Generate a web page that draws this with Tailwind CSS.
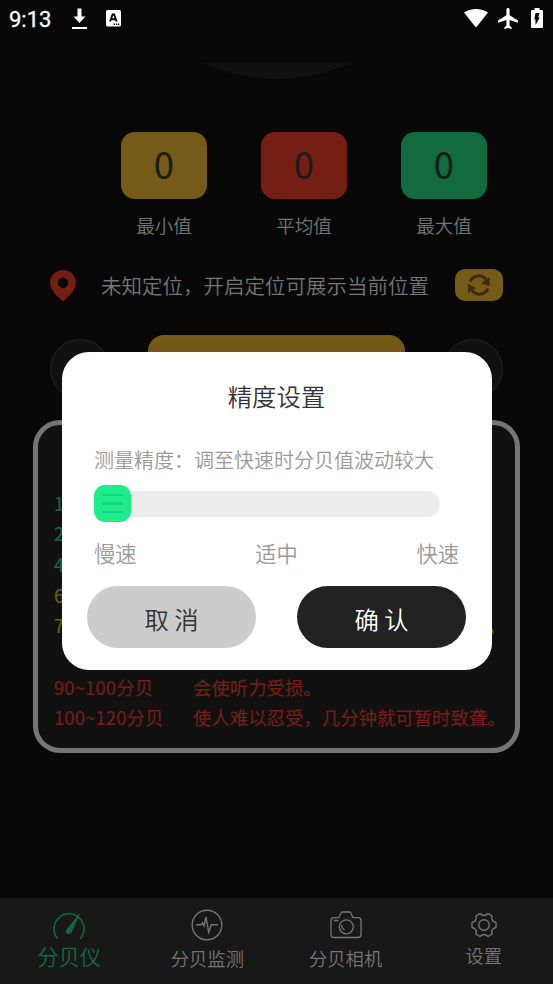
<!DOCTYPE html>
<html lang="zh-CN">
<head>
<meta charset="utf-8">
<title>分贝仪</title>
<script src="https://cdn.jsdelivr.net/npm/@tailwindcss/browser@4"></script>
</head>
<body class="bg-[#080808]">
<div class="relative w-[553px] h-[984px] overflow-hidden bg-[#080808] flex flex-col font-['Noto_Sans_CJK_SC',sans-serif] font-[350] text-[#757575] whitespace-nowrap">
  <!-- status bar -->
  <header class="h-[63px] shrink-0 flex items-start justify-between pl-[9px] pr-[10px] text-white">
    <div class="flex items-start pt-[7px]">
      <span class="font-[Roboto] font-normal text-[22px] leading-[25px] w-[63px] [-webkit-text-stroke:0.3px_white]">9:13</span>
      <svg class="w-[16px] h-[22px] mt-[1px]" viewBox="0 0 16 22" fill="currentColor"><path d="M5.500 0.500h4v8h4L7.500 15l-6-6.500h4zM0 19h15v2H0z"/></svg>
      <svg class="w-[15px] h-[17px] ml-[18px] mt-[3px]" viewBox="0 0 15 17"><rect width="15" height="16.500" rx="1.600" fill="#fff"/><path d="M4 11.500L6.600 4.500h1.500l2.600 7M5 9.300h4.700" fill="none" stroke="#080808" stroke-width="1.900"/><path d="M7.500 13.500h1.500v1.500H7.500zM10 13.500h1.300v1.500H10zM12 13.500h1.300v1.500H12z" fill="#080808"/></svg>
    </div>
    <div class="flex items-start pt-[8px]">
      <svg class="w-[24px] h-[19px] mt-[1px]" viewBox="0 0 24 19"><path d="M0 3.600Q5.400 0 12 0t12 3.600L12.700 17.700q-.7.800-1.400 0z" fill="#fff"/></svg>
      <svg class="w-[20px] h-[21px] ml-[10px]" viewBox="2 2 19 20" preserveAspectRatio="none"><path d="M21 16v-2l-8-5V3.500c0-.83-.67-1.500-1.500-1.500S10 2.670 10 3.500V9l-8 5v2l8-2.500V19l-2 1.500V22l3.500-1 3.500 1v-1.500L13 19v-5.500z" fill="#fff"/></svg>
      <svg class="w-[12px] h-[20px] ml-[13px]" viewBox="0 0 12 20"><path d="M1.300 2H3.500V0h5v2h2.200Q12 2 12 3.300V18.700Q12 20 10.700 20H1.300Q0 20 0 18.700V3.300Q0 2 1.300 2z" fill="#fff"/><path d="M4.500 5h4L7.200 9.500h1.600L4.500 17v-5.500H3.300z" fill="#080808"/></svg>
    </div>
  </header>

  <!-- lower edge of the meter dial -->
  <div class="h-[16px] shrink-0 overflow-hidden flex flex-col justify-end items-center">
    <div class="w-[354px] h-[354px] shrink-0 rounded-full bg-[#111111]"></div>
  </div>

  <!-- readings -->
  <section class="mt-[53px] shrink-0 ml-[121px] w-[366px] flex justify-between text-center">
    <div class="w-[86px]"><div class="h-[67px] rounded-[14px] bg-[#755b17] text-[#1c1c1c] font-normal text-[36.500px] leading-[64px]">0</div><div class="mt-[12px] text-[18.500px] leading-[28px]">最小值</div></div>
    <div class="w-[86px]"><div class="h-[67px] rounded-[14px] bg-[#751e14] text-[#1c1c1c] font-normal text-[36.500px] leading-[64px]">0</div><div class="mt-[12px] text-[18.500px] leading-[28px]">平均值</div></div>
    <div class="w-[86px]"><div class="h-[67px] rounded-[14px] bg-[#126a3f] text-[#1c1c1c] font-normal text-[36.500px] leading-[64px]">0</div><div class="mt-[12px] text-[18.500px] leading-[28px]">最大值</div></div>
  </section>

  <!-- location -->
  <section class="mt-[30px] h-[32px] shrink-0 flex items-center pl-[50px] pr-[50px]">
    <svg class="w-[26px] h-[31px] shrink-0" viewBox="0 0 26 31"><path fill-rule="evenodd" d="M13 0C5.600 0 0 5.800 0 13c0 7 7.500 13.500 11.700 17.400q1.300 1.200 2.600 0C18.500 26.500 26 20 26 13 26 5.800 20.400 0 13 0zm0 7.600a5.200 5.200 0 1 1 0 10.400 5.200 5.200 0 0 1 0-10.400z" fill="#751e14"/></svg>
    <span class="ml-[25px] text-[20.500px] leading-[30px]">未知定位，开启定位可展示当前位置</span>
    <div class="ml-auto w-[48px] h-[32px] rounded-[10px] bg-[#755b17] flex items-center justify-center">
      <svg class="w-[24px] h-[22px]" viewBox="0 0 24 22"><path d="M3 7.500C6 1.500 14-.5 19 5.500M21 14.500C18 20.500 10 22.500 5 16.500" fill="none" stroke="#3a2d0b" stroke-width="3"/><path d="M22.500 3v9l-8.500-2.500zM1 19v-9l8 4z" fill="#3a2d0b"/></svg>
    </div>
  </section>

  <!-- controls -->
  <section class="mt-[34px] h-[68px] shrink-0 flex items-center justify-between pl-[50px] pr-[50px]">
    <div class="w-[60px] h-[60px] rounded-full bg-[#111111] border border-[#242424]"></div>
    <div class="w-[257px] h-[68px] rounded-[16px] bg-linear-to-b from-[#755b17] to-[#754317]"></div>
    <div class="w-[60px] h-[60px] rounded-full bg-[#111111] border border-[#242424]"></div>
  </section>

  <!-- noise level table -->
  <section class="mt-[17px] ml-[33px] w-[487px] h-[333px] shrink-0 rounded-[27px] border-[5px] border-[#757575] bg-[#111111] pl-[16px] pt-[62.500px] text-[18.400px] leading-[30.700px] font-normal [-webkit-text-stroke:0.2px_currentColor]">
    <div class="grid grid-cols-[139px_1fr] text-[#126a3f]">
      <span class="tracking-[0.15px]">1~20分贝</span><span>安静。</span>
      <span class="tracking-[0.15px]">20~40分贝</span><span>轻声说话。</span>
      <span class="tracking-[0.15px]">40~60分贝</span><span>普通室内谈话。</span>
    </div>
    <div class="grid grid-cols-[139px_1fr] text-[#755b17]">
      <span class="tracking-[0.15px]">60~70分贝</span><span>有损神经。</span>
      <span class="tracking-[0.15px]">70~90分贝</span><span>很吵，长期在这种环境下学习和生活，<br>会使神经细胞受到破坏。</span>
    </div>
    <div class="grid grid-cols-[139px_1fr] text-[#751e14]">
      <span class="tracking-[0.15px]">90~100分贝</span><span>会使听力受损。</span>
      <span class="tracking-[0.15px]">100~120分贝</span><span>使人难以忍受，几分钟就可暂时致聋。</span>
    </div>
  </section>

  <!-- bottom tabs -->
  <nav class="mt-auto h-[86px] shrink-0 bg-[#181818] grid grid-cols-4 text-center text-[18.300px] leading-[28px]">
    <div class="flex flex-col items-center text-[#126a3f] pt-[13px]">
      <svg class="w-[32px] h-[30px]" viewBox="0 0 32 30"><path d="M4.700 28.200A15 15 0 1 1 27.300 28.200" transform="translate(0 -.5)" fill="none" stroke="currentColor" stroke-width="1.500"/><path d="M27.800 1L18.600 21.200q-2 2.600-4.200 1.500t-1-4z" fill="currentColor"/></svg>
      <span class="text-[21.300px] leading-[30px]">分贝仪</span>
    </div>
    <div class="flex flex-col items-center pt-[11px]">
      <svg class="w-[32px] h-[32px]" viewBox="0 0 32 32" fill="none" stroke="currentColor" stroke-width="1.400"><circle cx="16" cy="16" r="14.800"/><path d="M5 15.800h5.200l1.300-2 1.500 3.200L15 7.800l2.700 15.500 2.700-7.500H27"/></svg>
      <span class="mt-[3px]">分贝监测</span>
    </div>
    <div class="flex flex-col items-center pt-[13px]">
      <svg class="w-[32px] h-[28px]" viewBox="0 0 32 28" fill="none" stroke="currentColor" stroke-width="1.300"><path d="M4 6.700h5l2.200-5Q11.600 1 12.500 1h7q.9 0 1.300.7l2.200 5h5q3 0 3 3V23.500q0 3-3 3H4q-3 0-3-3V9.700q0-3 3-3z"/><circle cx="16.300" cy="15.800" r="7"/><path d="M4 9.500h4.500M11.800 14q0 4.200 3 4.800"/></svg>
      <span class="mt-[5px]">分贝相机</span>
    </div>
    <div class="flex flex-col items-center pt-[14px]">
      <svg class="w-[26px] h-[26px]" viewBox="0 0 26 26" fill="none" stroke="currentColor" stroke-width="1.400" stroke-linejoin="round"><circle cx="13" cy="13" r="5.300"/><path d="M9 1.500q4 4 8 0l4 2.300q-1.500 5.200 4 6.700v5q-5.500 1.500-4 6.700l-4 2.300q-4-4-8 0l-4-2.300q1.500-5.200-4-6.700v-5q5.500-1.500 4-6.700z"/></svg>
      <span class="mt-[3px]">设置</span>
    </div>
  </nav>

  <!-- precision dialog -->
  <div role="dialog" class="absolute left-[61.500px] top-[351.500px] w-[430px] h-[318.500px] rounded-[27px] bg-white flex flex-col text-[#999999]">
    <h1 class="mt-[26px] text-center text-[24.400px] leading-[36px] text-[#333333] font-[350]">精度设置</h1>
    <p class="mt-[31px] ml-[32.500px] text-[20px] leading-[30px]">测量精度：调至快速时分贝值波动较大</p>
    <div class="mt-[10.500px] ml-[32.500px] w-[346px] h-[37px] flex items-center">
      <div class="w-full h-[26px] rounded-full bg-[#ededed] flex items-center">
        <div class="w-[37px] h-[37px] rounded-[11px] bg-[#1dec8a] flex flex-col items-center justify-center gap-[6px]">
          <i class="w-[21px] h-[2.500px] rounded-full bg-[#1bd27c]"></i>
          <i class="w-[21px] h-[2.500px] rounded-full bg-[#1bd27c]"></i>
          <i class="w-[21px] h-[2.500px] rounded-full bg-[#1bd27c]"></i>
        </div>
      </div>
    </div>
    <div class="mt-[15px] mx-[32.500px] flex justify-between text-[21.300px] leading-[32px]"><span>慢速</span><span>适中</span><span>快速</span></div>
    <div class="mt-[16.500px] mx-[25.500px] flex justify-between text-[24.400px] leading-[65px] text-center">
      <button class="w-[169px] h-[62.500px] rounded-[31px] bg-[#cccccc] text-[#333333]">取 消</button>
      <button class="w-[169px] h-[62.500px] rounded-[31px] bg-[#222222] text-white">确 认</button>
    </div>
  </div>
</div>
</body>
</html>
